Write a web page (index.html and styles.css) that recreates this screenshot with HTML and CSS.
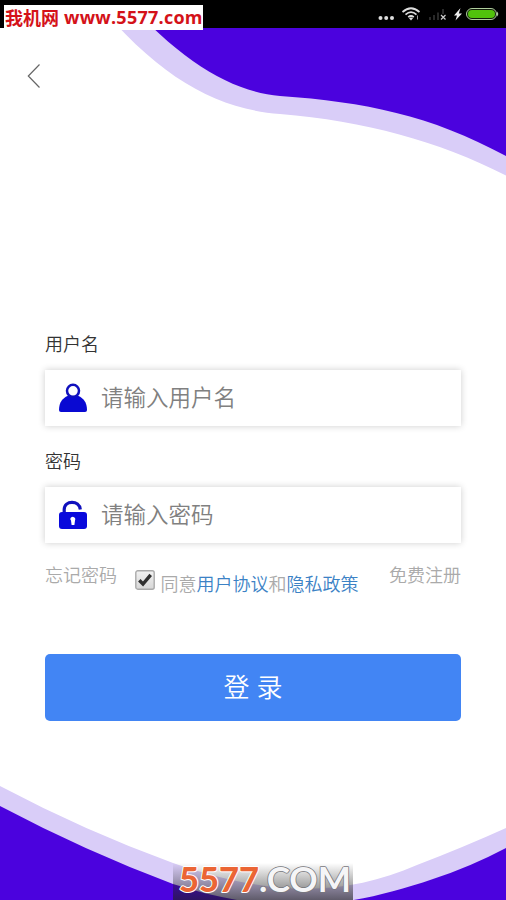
FILE: index.html
```html
<!DOCTYPE html>
<html lang="zh-CN">
<head>
<meta charset="utf-8">
<title>登录</title>
<link rel="stylesheet" href="styles.css">
</head>
<body>
<div class="screen">
  <svg class="waves" viewBox="0 0 506 900" aria-hidden="true">
    <path class="pale" d="M95 0C158 77 216 109 280 114C365 121 438 141 506 175.500V0Z"/>
    <path class="deep" d="M126 0C181 61 232 92 280 96C365 102 430 115 506 156V0Z"/>
    <path class="pale" d="M0 786Q85 831 173 863C275 898 345 896 417 865Q464 847 506 828V900H0Z"/>
    <path class="deep" d="M0 806Q85 851 173 884C275 917 348 908 433 879Q470 867 506 848V900H0Z"/>
  </svg>
  <header class="status">
    <div class="site"><span class="site-name">我机网</span><span class="site-url">www.5577.com</span></div>
    <svg class="indicators" viewBox="0 0 130 28" aria-hidden="true">
      <g fill="#ddd"><circle cx="4.500" cy="18" r="2"/><circle cx="10.200" cy="18" r="2"/><circle cx="16" cy="18" r="2"/></g>
      <g fill="none" stroke="#ddd" stroke-width="1.700"><path d="M26.500 12Q35 4.500 43.500 12M29.500 14.700Q35 9.700 40.500 14.700M32.200 17.200Q35 14.800 37.800 17.200"/></g>
      <path fill="#ddd" d="M33 18.200Q35 16.600 37 18.200L35 20.500Z"/><path stroke="#999" d="M41.500 15.500v4"/>
      <g fill="#292929"><path d="M53 17h2v3h-2zM57 15h2v5h-2zM61 12.500h2v7.500h-2zM66 9h2v5h-2z"/></g>
      <path stroke="#ccc" stroke-width="1.200" d="M65 15l4.500 4.500M69.500 15L65 19.500"/>
      <path fill="#eee" d="M84.500 8L78 15.500h3L79.500 20.500L86 13.500h-3.200Z"/>
      <rect x="90.500" y="8.500" width="30" height="11" rx="5.500" fill="#101b08" stroke="#b0ce9e"/>
      <rect x="92" y="10" width="27" height="8" rx="4" fill="#51c20b"/><path fill="#b0ce9e" d="M121 11.500q2.500 2.500 0 5Z"/>
    </svg>
  </header>
  <nav class="nav"><svg class="back" viewBox="0 0 14 26" aria-label="返回"><path d="M12.500 1.500L1.300 13L12.500 24.500"/></svg></nav>
  <form class="login">
    <label class="label" for="user">用户名</label>
    <div class="field">
      <svg class="icon" viewBox="0 0 30 30" aria-hidden="true"><path fill="#0909d2" d="M1 27C1 19 5 15 9.500 13H20.500C25 15 29 19 29 27Q29 29 27 29H3Q1 29 1 27Z"/><circle cx="15" cy="7.800" r="6" fill="#fff" stroke="#1010bd" stroke-width="2.500"/></svg>
      <input class="input" id="user" placeholder="请输入用户名">
    </div>
    <label class="label label-pass" for="pass">密码</label>
    <div class="field">
      <svg class="icon" viewBox="0 0 30 30" aria-hidden="true"><path fill="none" stroke="#1010bd" stroke-width="3.200" d="M6.200 14V9.500C6.200 0 21.500-.2 22.300 9.500"/><rect x="1" y="12" width="28" height="17" rx="3" fill="#0909dc"/><path fill="#fff" d="M12.300 19.200a2.500 2.500 0 1 1 4.700 1.300L16.400 25h-2.800L13 20.500Z"/></svg>
      <input class="input" id="pass" type="password" placeholder="请输入密码">
    </div>
    <div class="options">
      <a class="forgot">忘记密码</a>
      <div class="agree">
        <svg class="check" viewBox="0 0 20 20" aria-label="已同意"><defs><linearGradient id="box" x2="0" y2="1"><stop stop-color="#f2f2f2"/><stop offset="1" stop-color="#d7d7d7"/></linearGradient></defs><rect x=".8" y=".8" width="18.400" height="18.400" rx="2" fill="url(#box)" stroke="#aaa" stroke-width="1.400"/><path fill="none" stroke="#303030" stroke-width="3.400" d="M4.300 10.200L8 14L15.700 4.800"/></svg>
        <span>同意<a class="link">用户协议</a>和<a class="link">隐私政策</a></span>
      </div>
      <a class="register">免费注册</a>
    </div>
    <button class="submit" type="button">登 录</button>
  </form>
  <div class="brand"><svg viewBox="0 0 180 37" role="img" aria-label="5577.COM"><g class="brand-text"><text class="digits-edge" x="6" y="29" textLength="80" lengthAdjust="spacingAndGlyphs">5577<tspan class="domain" textLength="92" lengthAdjust="spacingAndGlyphs"></tspan></text><text class="domain" x="86" y="29" textLength="92" lengthAdjust="spacingAndGlyphs">.COM</text></g></svg></div>
</div>
</body>
</html>
```
FILE: styles.css
```css
* { box-sizing: border-box; }
body { margin: 0; font-family: "Noto Sans CJK SC", sans-serif; font-weight: 350; }
.screen { position: relative; width: 506px; height: 900px; overflow: hidden; background: #fff; display: flex; flex-direction: column; }
.waves { position: absolute; inset: 0; width: 506px; height: 900px; }
.pale { fill: #d9cdf8; }
.deep { fill: #4b02de; }
.status { position: relative; display: flex; justify-content: space-between; height: 28px; background: #000; }
.site { display: flex; align-items: center; width: 199px; height: 25px; margin: 5px 0 0 4px; background: #fff; color: #d41219; white-space: nowrap; font-weight: 700; }
.site-name { width: 60px; padding-left: 1px; font-size: 18px; line-height: 25px; }
.site-url { font: 700 18px/25px "Open Sans", sans-serif; letter-spacing: .25px; }
.indicators { width: 130px; height: 28px; }
.nav { height: 72px; padding: 35px 0 0 27px; position: relative; }
.back { display: block; width: 14px; height: 26px; fill: none; stroke: #666; stroke-width: 1.2; }
.login { position: relative; margin: 230px 45px 0; display: flex; flex-direction: column; }
.label { height: 40px; font-size: 18px; line-height: 26px; color: #333; }
.label-pass { margin-top: 21px; height: 40px; }
.field { display: flex; align-items: center; height: 56px; padding-left: 13px; background: #fff; box-shadow: 0 0 7px rgba(0, 0, 0, .2); }
.icon { width: 30px; height: 30px; flex: none; }
.input { width: 340px; height: 50px; margin-left: 13px; padding: 0 0 5px; border: 0; outline: 0; background: transparent; font: inherit; font-size: 22.5px; }
.input::placeholder { color: #808080; opacity: 1; }
.options { display: flex; align-items: flex-start; justify-content: space-between; height: 111px; padding-top: 18px; font-size: 18px; line-height: 26px; color: #aaa; white-space: nowrap; }
.agree { display: flex; align-items: flex-start; gap: 6px; margin: 9px 13px 0 0; }
.check { width: 20px; height: 20px; }
.link { color: #3c82c5; }
.submit { height: 67px; padding: 0 0 4px; border: 0; border-radius: 5px; background: #4285f4; color: #fff; font: inherit; font-size: 26px; word-spacing: 1px; }
.brand { position: absolute; left: 173px; bottom: 0; width: 180px; height: 37px; background: linear-gradient(rgba(0, 0, 0, 0), rgba(30, 30, 30, .65)); }
.brand svg { display: block; width: 180px; height: 37px; overflow: visible; }
.brand-text { font-family: Lato, sans-serif; font-size: 34px; font-weight: 700; paint-order: stroke; stroke-linejoin: round; }
.digits-edge { fill: #eb6534; stroke: #fff; stroke-width: 2px; font-weight: 900; }
.domain { fill: #f5f5f7; stroke: #77777c; stroke-width: 1.5px; }
```
